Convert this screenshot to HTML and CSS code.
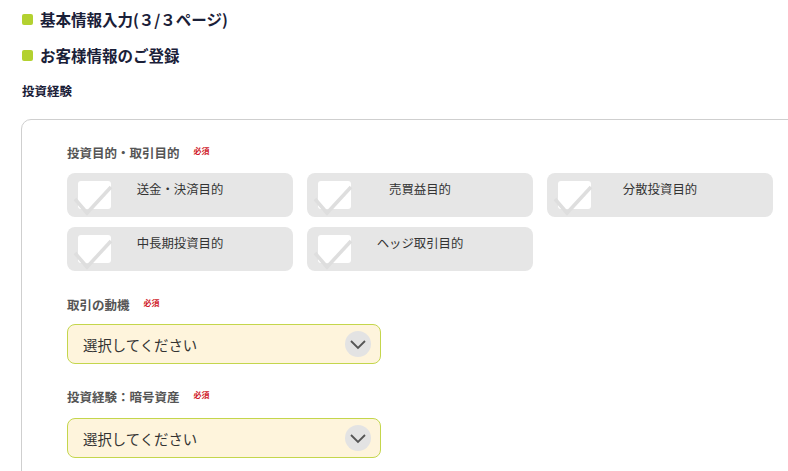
FILE: index.html
```html
<!DOCTYPE html>
<html lang="ja">
<head>
<meta charset="utf-8">
<link rel="stylesheet" href="styles.css">
</head>
<body>
<div class="page">
  <h1 class="heading">基本情報入力(３/３ページ)</h1>
  <h2 class="heading sub">お客様情報のご登録</h2>
  <h3 class="section">投資経験</h3>
  <div class="card">
    <div class="field">
      <div class="label">投資目的・取引目的<span class="req">必須</span></div>
      <div class="checks">
        <label class="check"><span class="box"><svg viewBox="0 0 40 34" width="40" height="34"><polyline points="1,15 13,29 37,3" /></svg></span><span class="ctext">送金・決済目的</span></label>
        <label class="check"><span class="box"><svg viewBox="0 0 40 34" width="40" height="34"><polyline points="1,15 13,29 37,3" /></svg></span><span class="ctext">売買益目的</span></label>
        <label class="check"><span class="box"><svg viewBox="0 0 40 34" width="40" height="34"><polyline points="1,15 13,29 37,3" /></svg></span><span class="ctext">分散投資目的</span></label>
        <label class="check"><span class="box"><svg viewBox="0 0 40 34" width="40" height="34"><polyline points="1,15 13,29 37,3" /></svg></span><span class="ctext">中長期投資目的</span></label>
        <label class="check"><span class="box"><svg viewBox="0 0 40 34" width="40" height="34"><polyline points="1,15 13,29 37,3" /></svg></span><span class="ctext">ヘッジ取引目的</span></label>
      </div>
    </div>
    <div class="field">
      <div class="label">取引の動機<span class="req">必須</span></div>
      <div class="select"><span>選択してください</span><span class="chev"><svg viewBox="0 0 26 26" width="26" height="26"><polyline points="6,10 13,17 20,10" /></svg></span></div>
    </div>
    <div class="field">
      <div class="label">投資経験：暗号資産<span class="req">必須</span></div>
      <div class="select"><span>選択してください</span><span class="chev"><svg viewBox="0 0 26 26" width="26" height="26"><polyline points="6,10 13,17 20,10" /></svg></span></div>
    </div>
  </div>
</div>
</body>
</html>
```
FILE: styles.css
```css
html, body {
  margin: 0;
  padding: 0;
  background: #fff;
  overflow: hidden;
}
body {
  font-family: "Noto Sans CJK JP", "Noto Sans", sans-serif;
  color: #333;
}
.page {
  padding: 9px 0 0 22px;
}
.heading {
  margin: 0;
  font-size: 15.5px;
  line-height: 20px;
  font-weight: bold;
  color: #1a2038;
  display: flex;
  align-items: center;
}
.heading::before {
  content: "";
  width: 11px;
  height: 11px;
  border-radius: 2px;
  background: #b3d130;
  margin-right: 7px;
}
.sub {
  margin-top: 16px;
}
.section {
  margin: 18px 0 0;
  font-size: 12.5px;
  line-height: 16px;
  font-weight: bold;
  color: #1a2038;
}
.card {
  margin: 20px -40px 0 -1px;
  border: 1px solid #cfcfcf;
  border-radius: 10px;
  padding: 25px 0 40px 45px;
}
.field + .field {
  margin-top: 26px;
}
.field:last-child {
  margin-top: 25px;
}
.label {
  font-size: 12.5px;
  line-height: 16px;
  font-weight: bold;
  color: #555;
  display: flex;
  align-items: center;
}
.req {
  font-size: 8px;
  color: #d0202a;
  margin-left: 14px;
  font-weight: bold;
  position: relative;
  top: -2px;
}
.checks {
  margin-top: 12px;
  display: grid;
  grid-template-columns: repeat(3, 226px);
  column-gap: 14px;
  row-gap: 10px;
}
.check {
  position: relative;
  height: 44px;
  background: #e6e6e6;
  border-radius: 8px;
  display: flex;
  justify-content: center;
  padding-top: 7px;
  box-sizing: border-box;
}
.box {
  position: absolute;
  left: 11px;
  top: 8px;
  width: 33px;
  height: 28px;
  background: #fff;
  border-radius: 3px;
}
.box svg {
  position: absolute;
  left: -4px;
  top: 3px;
  overflow: visible;
}
.box polyline {
  fill: none;
  stroke: #dedede;
  stroke-width: 3.5;
}
.ctext {
  font-size: 12.4px;
  line-height: 18px;
  color: #333;
}
.select {
  margin-top: 11px;
  width: 314px;
  height: 40px;
  box-sizing: border-box;
  background: #fef4dc;
  border: 1px solid #c4d64c;
  border-radius: 8px;
  display: flex;
  align-items: center;
  justify-content: space-between;
  padding: 0 9px 0 15px;
  font-size: 14.4px;
  color: #333;
}
.field:last-child .select {
  margin-top: 13px;
}
.chev {
  width: 26px;
  height: 26px;
  border-radius: 50%;
  background: #e3e3e3;
  display: flex;
}
.chev polyline {
  fill: none;
  stroke: #555;
  stroke-width: 1.8;
}
```
